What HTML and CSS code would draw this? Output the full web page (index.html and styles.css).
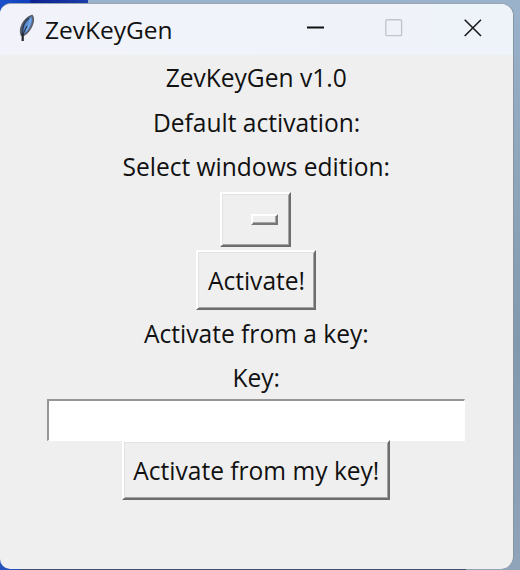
FILE: index.html
```html
<!DOCTYPE html>
<html lang="en">
<head>
<meta charset="utf-8">
<title>ZevKeyGen</title>
<link rel="stylesheet" href="styles.css">
</head>
<body>
<main class="window">
  <header class="titlebar">
    <svg class="feather" width="18" height="30" viewBox="0 0 18 30">
      <path d="M3.5 21 C1 15 5 5 14 1.5 C17 5 14 16 6 21 Z" fill="#5a8cd2" stroke="#5d6068" stroke-width="1.8"/>
      <path d="M4.5 20 C4 13 7 7 11 4" fill="none" stroke="#303d55" stroke-width="1.6"/>
      <path d="M8 17 C11 13 12 8 12.5 5" fill="none" stroke="#80aeea" stroke-width="1.4"/>
      <path d="M4.7 27 L4.7 19" fill="none" stroke="#20242b" stroke-width="2.2"/>
      <path d="M5 20 L9 12" fill="none" stroke="#2a3a58" stroke-width="1.2"/>
    </svg>
    <h1 class="title">ZevKeyGen</h1>
    <div class="controls">
      <svg width="18" height="18" viewBox="0 0 18 18"><path d="M1 8.5H18" stroke="#111" stroke-width="1.8"/></svg>
      <svg width="18" height="18" viewBox="0 0 18 18"><rect x=".8" y=".8" width="15.8" height="15.8" rx="1.2" fill="none" stroke="#c3c5c9" stroke-width="1.4"/></svg>
      <svg width="18" height="18" viewBox="0 0 18 18"><path d="M.7 .7L17 17M17 .7L.7 17" stroke="#1b1c1e" stroke-width="1.6"/></svg>
    </div>
  </header>
  <section class="content">
    <p class="label"><span class="text">ZevKeyGen v1.0</span></p>
    <p class="label"><span class="text">Default activation:</span></p>
    <p class="label"><span class="text">Select windows edition:</span></p>
    <div class="raised option"><span class="indicator"></span></div>
    <div class="raised activate"><span class="text">Activate!</span></div>
    <p class="label"><span class="text">Activate from a key:</span></p>
    <p class="label"><span class="text">Key:</span></p>
    <div class="entry"></div>
    <div class="raised from-key"><span class="text">Activate from my key!</span></div>
  </section>
</main>
</body>
</html>
```
FILE: styles.css
```css
* { box-sizing: border-box; }
html { height: 100%; }
body {
  margin: 0;
  height: 570px;
  padding-top: 3px;
  overflow: hidden;
  background:
    linear-gradient(90deg, #1b50c8 0, #103fbd 30px, #0c2190 31px, #1c3da9 88px, transparent 88px) 0 0 / 100% 20px no-repeat,
    linear-gradient(#2452bd, #2452bd) 0 100% / 20px 20px no-repeat,
    linear-gradient(90deg, #44506f 0, #44506f 466px, transparent 466px) 0 100% / 100% 2px no-repeat,
    linear-gradient(#9ab2ca, #8298ad 60%, #8fa4b8);
  font-family: "Open Sans", "Noto Sans", sans-serif;
  color: #111;
}
.window {
  width: 514px;
  height: 566px;
  border-right: 1px solid #8794a2;
  border-top: 1px solid #98a5b2;
  border-radius: 11px 13px 13px 10px;
  background: #efefef;
  overflow: hidden;
}
.titlebar {
  height: 51px;
  display: flex;
  align-items: center;
  padding: 0 31px 3px 18px;
  background: linear-gradient(90deg, #f2f3fa, #eef3f9);
}
.feather { flex: none; margin-top: 2px; }
.title {
  margin: 4px 0 0 9px;
  font-size: 24.5px;
  line-height: 34px;
  font-weight: 400;
  white-space: nowrap;
}
.controls { margin-left: auto; display: flex; gap: 61px; }
.controls svg { display: block; }
.content { display: flex; flex-direction: column; align-items: center; padding-right: 2px; }
.label { flex: none; margin: 0; height: 44.5px; line-height: 45px; }
.text { display: inline-block; font-size: 25px; white-space: nowrap; transform: translate(1px, .4px) scaleX(.982); }
.raised {
  flex: none;
  display: flex;
  align-items: center;
  justify-content: center;
  border: 2px solid;
  border-color: #fff #6d6d6d #6d6d6d #fff;
  box-shadow: inset 1px 1px #e2e2e2, inset -1px -1px #a4a4a4;
}
.option { width: 71px; height: 55px; margin-top: 3px; justify-content: flex-end; padding-right: 11px; }
.indicator {
  width: 27px;
  height: 11px;
  border: 2px solid;
  border-color: #fff #777 #777 #fff;
  box-shadow: inset -1px -1px #a5a5a5;
}
.activate { width: 120px; height: 60px; margin: 3px 0 1px; }
.entry {
  width: 418px;
  height: 42px;
  flex: none;
  margin-top: -1px;
  background: #fff;
  border-top: 2px solid #969696;
  border-left: 2px solid #969696;
  border-right: 1px solid #fff;
  border-bottom: 1px solid #fff;
}
.from-key { width: 268px; height: 60px; margin-top: -1px; }
```
